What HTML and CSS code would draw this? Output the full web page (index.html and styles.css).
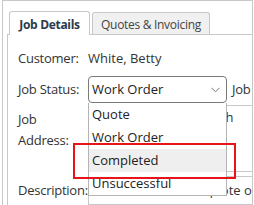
FILE: index.html
```html
<!DOCTYPE html>
<html lang="en">
<head>
<meta charset="UTF-8" />
<title>Job Details</title>
<link rel="stylesheet" href="styles.css">
</head>
<body>
  <div class="frame">
    <div class="tabs">
      <div class="tab active">Job Details</div>
      <div class="tab">Quotes &amp; Invoicing</div>
    </div>
    <div class="panel">
      <div class="row">
        <span class="label">Customer:</span>
        <span class="value">White, Betty</span>
      </div>
      <div class="row status-row">
        <span class="label">Job Status:</span>
        <div class="select-wrap">
          <div class="select">
            <span>Work Order</span>
            <svg class="chevron" width="9" height="6" viewBox="0 0 9 6"><path d="M0.5 0.8 L4.5 4.8 L8.5 0.8" fill="none" stroke="#777" stroke-width="1"/></svg>
          </div>
          <ul class="options">
            <li>Quote</li>
            <li>Work Order</li>
            <li class="hover">Completed</li>
            <li>Unsuccessful</li>
          </ul>
          <div class="callout"></div>
        </div>
        <span class="label side">Job Type:</span>
      </div>
      <div class="row top-row">
        <span class="label">Job Address:</span>
        <div class="box address">14 Kellerman Rd, North</div>
      </div>
      <div class="row desc-row">
        <span class="label">Description:</span>
        <div class="box desc">Customer wants a quote on a new hot water system</div>
      </div>
    </div>
  </div>
</body>
</html>
```

FILE: styles.css
```css
* {
  box-sizing: border-box;
}

body {
  margin: 0;
  font-family: "Open Sans", "Liberation Sans", sans-serif;
  font-size: 13px;
  line-height: 21px;
  color: #333;
  background: #fff;
}

.frame {
  margin-left: 2px;
  width: 251px;
  height: 220px;
  border: 1px solid #c8c8c8;
  border-bottom: none;
  overflow: hidden;
}

/* Tabs */
.tabs {
  display: flex;
  align-items: flex-end;
  padding: 10px 0 0 6px;
  font-size: 12px;
  letter-spacing: -0.3px;
}

.tab {
  width: 118px;
  height: 22px;
  margin-right: 2px;
  padding-top: 1px;
  border: 1px solid #c8c8c8;
  border-bottom: none;
  border-radius: 3px 3px 0 0;
  background: #f0f0f0;
  color: #444;
  text-align: center;
  white-space: nowrap;
}

.tab.active {
  width: 81px;
  height: 24px;
  margin-bottom: -1px;
  padding-top: 2px;
  background: #fff;
  font-weight: 700;
  color: #2b3a4a;
}

/* Panel */
.panel {
  margin-left: 4px;
  margin-right: -20px;
  padding: 13px 0 0 10px;
  border: 1px solid #c8c8c8;
  border-bottom: none;
  height: 200px;
}

.row {
  display: flex;
  align-items: center;
  white-space: nowrap;
}

.status-row {
  margin-top: 7px;
}

.top-row {
  align-items: flex-start;
  margin-top: 2px;
}

.desc-row {
  margin-top: 4px;
}

.label {
  flex: 0 0 70px;
  white-space: normal;
  letter-spacing: -0.25px;
}

.top-row .label {
  padding-top: 4px;
}

.label.side {
  flex: none;
  margin-left: 5px;
  white-space: nowrap;
}

/* Select with open list */
.select-wrap {
  position: relative;
  flex: 0 0 139px;
}

.select {
  height: 27px;
  display: flex;
  align-items: center;
  justify-content: space-between;
  padding: 0 6px 0 3px;
  border: 1px solid #7a7a7a;
  border-radius: 4px;
  color: #222;
}

.options {
  position: absolute;
  top: 27px;
  left: 0;
  width: 139px;
  margin: 0;
  padding: 0;
  list-style: none;
  background: #fff;
  border: 1px solid #b4b4b4;
  border-top: none;
  z-index: 2;
}

.options li {
  height: 23px;
  line-height: 23px;
  padding-left: 3px;
  color: #222;
}

.options li.hover {
  background: #efefef;
}

.callout {
  position: absolute;
  left: -15px;
  top: 67px;
  width: 163px;
  height: 36px;
  border: 2px solid #e8141b;
  z-index: 3;
}

/* Text boxes behind the list */
.box {
  flex: 1;
  border: 1px solid #c8c8c8;
  padding: 1px 3px;
  overflow: hidden;
}

.box.address {
  height: 67px;
}

.box.desc {
  height: 29px;
  padding-top: 3px;
}
```
